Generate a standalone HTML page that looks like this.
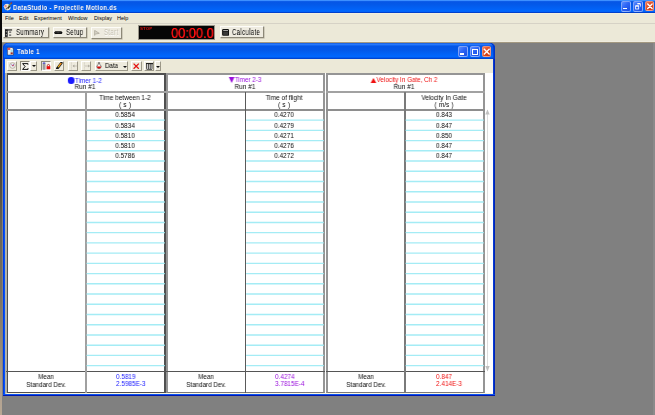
<!DOCTYPE html>
<html><head><meta charset="utf-8">
<style>
*{margin:0;padding:0;box-sizing:border-box}
html,body{width:655px;height:415px;overflow:hidden;background:#808080;font-family:"Liberation Sans",sans-serif;position:relative}
.a{position:absolute}
.t{position:absolute;white-space:nowrap;line-height:1;will-change:transform}
.sx{transform-origin:0 0}
#leftstrip{left:0;top:0;width:2.2px;height:415px;background:linear-gradient(#080808 0%,#0c0b0a 14%,#2a2418 25%,#4a4232 40%,#6a6458 55%,#7a7060 70%,#9a8c78 85%,#b0a090 94%,#b8a894 100%)}
#rightstrip{left:653px;top:43px;width:2px;height:372px;background:#8a8a8a}
#title{left:2px;top:0;width:653px;height:13px;background:linear-gradient(#3d8fff 0,#3d8fff 0.7px,#0656e6 1.6px,#0458e8 4px,#0262f6 9px,#0068ff 11.4px,#0044d4 12.2px,#0038c0 13px)}
#menubar{left:2px;top:13px;width:653px;height:10.5px;background:linear-gradient(#f8f4e2 0,#ECE9D8 1.2px)}
#sep{left:2px;top:23px;width:653px;height:1px;background:#d6d2c6}
#toolbar{left:2px;top:24px;width:653px;height:19px;background:linear-gradient(#ECE9D8 0,#ECE9D8 16.5px,#f8f6ea 17.4px,#b8ac90 18.2px,#807868 19px)}
.btn{position:absolute;background:#EEEBE0;border-right:1px solid #8c8878;border-bottom:1px solid #8c8878;border-top:1px solid #fdfcf8;border-left:1px solid #fdfcf8;box-shadow:0.6px 0.6px 0 #bcb8a8}
.mt{font-size:6.1px;color:#000;transform:scaleX(0.9);transform-origin:0 0;will-change:auto}
.bt{font-size:8.5px;color:#000;letter-spacing:0.45px;transform:scaleX(0.715);transform-origin:0 0;will-change:transform}
.tb{border:0.7px solid rgba(200,220,255,0.55);border-radius:2px;background:linear-gradient(135deg,#5a8cff 0%,#2c64f4 45%,#1a4ee0 100%)}
.tc{border:0.7px solid rgba(255,220,210,0.5);border-radius:2px;background:linear-gradient(135deg,#f07a58 0%,#e04c22 45%,#c83812 100%)}
#child{left:3px;top:43px;width:492.2px;height:353.2px;background:linear-gradient(90deg,#0030d8 0,#0050f8 1.2px,#0a58ff 2.2px,#0a58ff 489.2px,#1060ff 489.8px,#0028c0 490.8px,#0020b0 492.2px);border-radius:5px 5px 0 0}
#ctitle{left:3px;top:43px;width:492.2px;height:16px;border-radius:5px 5px 0 0;box-shadow:inset -1.6px 0 0 #0034c8,inset 1px 0 0 #0040d8;background:linear-gradient(#0040d0 0,#3a8cff 1px,#1a6cf8 1.8px,#0456e6 3.5px,#0458e8 7px,#0262f6 11px,#0068ff 14px,#0048d8 15.2px,#0040c8 16px)}
#cframe{display:none}
#cbottom{left:3px;top:393.6px;width:492.2px;height:2.6px;background:linear-gradient(#1466ff 0,#0a50f0 0.6px,#0018b0 1.4px,#0010a0 2.6px)}
#ctool{left:5.2px;top:59px;width:487.5px;height:13.8px;background:#ECE9D8}
#content{left:5.2px;top:72.8px;width:487.5px;height:321px;background:#fff;border-left:2px solid #b0b0aa;border-bottom:1px solid #fcf6dc}
.grp{position:absolute;top:73px;height:320px;border:1.5px solid #8c8c8c}
.hline{position:absolute;height:1.5px;background:#8a8a8a}
.vline{position:absolute;width:1.2px;background:#6a6a6a}
.cy{position:absolute;height:1px;background:#a6e8f2}
.ht{font-size:6.3px;color:#222}
.dv{font-size:6.2px;color:#222}
.cbtn{position:absolute;top:61px;height:10px;background:#EEEBDE;border-top:1px solid #fff;border-left:1px solid #fff;border-right:1px solid #9c9888;border-bottom:1px solid #9c9888}
.cbtn.p{border-top:1px solid #8c8878;border-left:1px solid #8c8878;border-right:1px solid #fff;border-bottom:1px solid #fff;background:#f4f2ea}
</style></head><body>
<div id="leftstrip" class="a"></div>
<div id="rightstrip" class="a"></div>
<div id="title" class="a"></div>
<!-- app icon -->
<svg class="a" style="left:3px;top:1.5px" width="9" height="9" viewBox="0 0 9 9">
<path d="M0.8 4.2 Q1.5 1.8 4.2 1.8 L6 2.6 L7.6 5.2 Q7.8 8 4.6 8.4 Q1.4 8.2 0.8 4.2 Z" fill="#ece4d6"/>
<circle cx="2.6" cy="4.2" r="1.1" fill="#e88888"/>
<circle cx="3.6" cy="6.6" r="0.9" fill="#6a6a5a"/>
<path d="M4.2 5.8 L6.2 3.6 L7.4 4.6 L5.2 7 Z" fill="#2a2a1a"/>
<path d="M5.6 4.2 L8.4 1" stroke="#7a8a2a" stroke-width="1.1"/>
<circle cx="8.3" cy="1" r="0.7" fill="#c02020"/>
</svg>
<div class="t" style="left:12.8px;top:3.7px;font-size:7px;font-weight:bold;color:#fff;text-shadow:0.4px 0.4px 0 #0a3aa0;letter-spacing:0.38px;transform:scaleX(0.85);transform-origin:0 0">DataStudio - Projectile Motion.ds</div>
<!-- title buttons -->
<div class="a tb" style="left:620.8px;top:0.9px;width:10px;height:10.7px"></div>
<div class="a" style="left:623.1px;top:7.6px;width:3.9px;height:1.4px;background:#fff"></div>
<div class="a tb" style="left:632.9px;top:0.9px;width:10px;height:10.7px"></div>
<svg class="a" style="left:632.9px;top:0.9px" width="10" height="11" viewBox="0 0 10 11"><path d="M4.4 2.9 H7.4 V5.6" stroke="#fff" stroke-width="0.8" fill="none"/><path d="M4.4 2.6 H7.4" stroke="#fff" stroke-width="1.1"/><rect x="2.6" y="5" width="3.1" height="3" stroke="#fff" stroke-width="0.8" fill="none"/><path d="M2.6 4.9 H5.7" stroke="#fff" stroke-width="1.2"/></svg>
<div class="a tc" style="left:644.6px;top:1px;width:9.8px;height:10.4px"></div>
<svg class="a" style="left:644.6px;top:1px" width="10" height="11" viewBox="0 0 10 11"><path d="M2.7 3 L7.1 7.4 M7.1 3 L2.7 7.4" stroke="#fff" stroke-width="1.4" stroke-linecap="round"/></svg>

<div id="menubar" class="a"></div>
<div id="sep" class="a"></div>
<div class="t mt" style="left:4.7px;top:15.4px">File</div>
<div class="t mt" style="left:18.5px;top:15.4px">Edit</div>
<div class="t mt" style="left:34px;top:15.4px">Experiment</div>
<div class="t mt" style="left:68px;top:15.4px">Window</div>
<div class="t mt" style="left:93.5px;top:15.4px">Display</div>
<div class="t mt" style="left:117px;top:15.4px">Help</div>

<div id="toolbar" class="a"></div>
<!-- Summary -->
<div class="btn" style="left:3.4px;top:26.6px;width:45.5px;height:11.9px"></div>
<svg class="a" style="left:5px;top:28.5px" width="8" height="9" viewBox="0 0 8 9"><rect x="0" y="0.4" width="7.1" height="1.1" fill="#111"/><rect x="0" y="0.5" width="2.7" height="7.4" fill="#222"/><circle cx="1.3" cy="2.7" r="0.55" fill="#fff"/><circle cx="1.3" cy="5.8" r="0.55" fill="#fff"/><rect x="4.1" y="2.6" width="2.1" height="1" fill="#333"/><rect x="4.1" y="5.6" width="2.1" height="1" fill="#333"/></svg>
<div class="t mt bt" style="left:15.8px;top:28px">Summary</div>
<!-- Setup -->
<div class="btn" style="left:53.2px;top:26.7px;width:33.6px;height:11.6px"></div>
<svg class="a" style="left:54px;top:30.8px" width="9" height="3.4" viewBox="0 0 9 3.4"><path d="M0 1.7 L1.2 0.2 H7.4 L8.6 1.7 L7.4 3.2 H1.2 Z" fill="#0a0a0a"/><path d="M1.6 1.7 H7" stroke="#999" stroke-width="0.5" stroke-dasharray="0.8 0.5"/></svg>
<div class="t mt bt" style="left:65.5px;top:28px">Setup</div>
<!-- Start -->
<div class="btn" style="left:91.1px;top:26.8px;width:30.8px;height:11.9px"></div>
<svg class="a" style="left:93.5px;top:29.5px" width="6" height="6" viewBox="0 0 6 6"><path d="M0.7 0.3 V5.6" stroke="#a8a496" stroke-width="0.9"/><path d="M0.9 0.6 L5.3 3.3 L0.9 4.2" stroke="#a8a496" stroke-width="0.7" fill="#d4d0c4"/></svg>
<div class="t mt bt" style="left:104px;top:28px;color:#c4c0b2;text-shadow:0.6px 0.6px 0 #fff">Start</div>
<!-- Timer -->
<div class="a" style="left:138.3px;top:24.8px;width:76.4px;height:15.6px;background:#050505;border:0.8px solid #9a968a"></div>
<div class="t" style="left:140px;top:27.2px;font-size:4.3px;font-weight:bold;color:#d41010;transform:scaleX(1.05);transform-origin:0 0">STOP</div>
<div class="t" style="left:171px;top:26.5px;font-size:13.9px;color:#ff1212;text-shadow:0.3px 0 0 #ff1212;transform:scaleX(0.92);transform-origin:0 0">00:00.0</div>
<!-- Calculate -->
<div class="btn" style="left:219.5px;top:26.2px;width:44.5px;height:12.3px"></div>
<svg class="a" style="left:221.6px;top:29.1px" width="7.4" height="7" viewBox="0 0 7.4 7"><rect x="0.1" y="0.1" width="7" height="6.7" rx="1.2" fill="#111"/><rect x="1.2" y="1.1" width="4.8" height="0.8" fill="#ccc"/><rect x="1.2" y="2.6" width="4.8" height="3.3" fill="#3a3a3a"/></svg>
<div class="t mt bt" style="left:231.6px;top:28px">Calculate</div>

<!-- child window -->
<div id="child" class="a"></div>
<div id="ctitle" class="a"></div>
<div id="cframe" class="a"></div>
<div id="cbottom" class="a"></div>
<svg class="a" style="left:6.5px;top:47.4px" width="7" height="8.4" viewBox="0 0 7 8.4"><path d="M0.4 0.4 H5 L6.5 1.9 V8 H0.4 Z" fill="#f6f2e8" stroke="#1a2a60" stroke-width="0.6"/><ellipse cx="2" cy="1.9" rx="1.5" ry="1.2" fill="#e85050"/><rect x="3.6" y="2.4" width="2.2" height="3.2" fill="#a8d8e0"/><rect x="3.6" y="5.4" width="2.2" height="1.8" fill="#a03028"/><rect x="1" y="3.6" width="1.6" height="3.6" fill="#e0e8f0"/></svg>
<div class="t" style="left:16.5px;top:48.2px;font-size:7.4px;font-weight:bold;color:#fff;text-shadow:0.4px 0.4px 0 #0a3aa0;letter-spacing:0.3px;transform:scaleX(0.85);transform-origin:0 0">Table 1</div>
<div class="a tb" style="left:457.9px;top:46.4px;width:9.9px;height:10.4px"></div>
<div class="a" style="left:460.1px;top:53.3px;width:3.9px;height:1.6px;background:#fff"></div>
<div class="a tb" style="left:470px;top:46.4px;width:9.7px;height:10.4px"></div>
<div class="a" style="left:471.8px;top:49.1px;width:6px;height:5.8px;border:0.75px solid #fff;border-top-width:1.5px"></div>
<div class="a tc" style="left:481.9px;top:46.4px;width:9.6px;height:10.4px"></div>
<svg class="a" style="left:481.9px;top:46.4px" width="10" height="11" viewBox="0 0 10 11"><path d="M1.8 2.8 L7.6 8.6 M7.6 2.8 L1.8 8.6" stroke="#fff" stroke-width="1.35"/></svg>

<div id="ctool" class="a"></div>
<!-- clock -->
<div class="cbtn" style="left:6.5px;width:10.5px"></div>
<svg class="a" style="left:9px;top:62px" width="7" height="7" viewBox="0 0 7 7"><circle cx="3.5" cy="3.5" r="2.8" fill="#f4f2ea" stroke="#aaa59a" stroke-width="0.8"/><path d="M2.5 2.5 L3.8 4.2 L4.5 2.2" stroke="#7050c0" stroke-width="0.9" fill="none"/><circle cx="4" cy="3.4" r="0.7" fill="#e04040"/></svg>
<!-- sigma -->
<div class="cbtn p" style="left:20px;width:10px"></div>
<svg class="a" style="left:21.5px;top:63px" width="7" height="7" viewBox="0 0 7 7"><path d="M5.9 1.7 V0.6 H0.6 L3.1 3.5 L0.6 6.4 H6 V5.2" stroke="#111" stroke-width="1" fill="none" stroke-linejoin="miter"/></svg>
<div class="cbtn" style="left:30px;width:7px"></div>
<svg class="a" style="left:32px;top:65px" width="4" height="2" viewBox="0 0 4 2"><path d="M0 0 H4 L2 2 Z" fill="#111"/></svg>
<!-- lock -->
<div class="cbtn p" style="left:41px;width:9.5px"></div>
<svg class="a" style="left:42px;top:62px" width="9" height="8" viewBox="0 0 9 8"><rect x="0.7" y="0.8" width="2.7" height="6.8" fill="#8a8a8a"/><rect x="1.6" y="0.8" width="0.9" height="6.8" fill="#b4b4b4"/><ellipse cx="2.05" cy="1" rx="1.35" ry="0.6" fill="#2828e8"/><path d="M5.3 4.4 V3.6 A1.15 1.15 0 0 1 7.6 3.6 V4.4" stroke="#b01010" stroke-width="0.8" fill="none"/><rect x="4.6" y="4.2" width="3.7" height="3" fill="#e80c0c"/></svg>
<!-- pencil -->
<div class="cbtn" style="left:54px;width:10px"></div>
<svg class="a" style="left:56px;top:62.4px" width="7" height="7" viewBox="0 0 7 7"><path d="M1.3 6.5 L5.4 0.9" stroke="#1a1a1a" stroke-width="2.5" stroke-linecap="round"/><path d="M2.2 5.2 L5.2 1.1" stroke="#f4b820" stroke-width="1.2"/><path d="M3.6 3.4 L5.2 1.1" stroke="#e86818" stroke-width="0.8"/></svg>
<!-- arrows -->
<div class="cbtn" style="left:68px;width:10px"></div>
<svg class="a" style="left:69.5px;top:62.2px" width="8" height="8" viewBox="0 0 8 8"><path d="M1.4 0.5 V7.5" stroke="#d0ccc0" stroke-width="1" stroke-dasharray="1.2 0.8"/><path d="M3 4 H7" stroke="#c8c4b8" stroke-width="1"/><path d="M2.6 4 L4.4 2.5 V5.5 Z" fill="#a8a498"/></svg>
<div class="cbtn" style="left:81px;width:10px"></div>
<svg class="a" style="left:82.5px;top:62.2px" width="8" height="8" viewBox="0 0 8 8"><path d="M1.4 0.5 V7.5" stroke="#d0ccc0" stroke-width="1" stroke-dasharray="1.2 0.8"/><path d="M1.8 4 H5.5" stroke="#c8c4b8" stroke-width="1"/><path d="M7 4 L5.2 2.5 V5.5 Z" fill="#a8a498"/></svg>
<!-- Data -->
<div class="cbtn" style="left:94.5px;width:33.5px"></div>
<svg class="a" style="left:96px;top:62.3px" width="6" height="7.2" viewBox="0 0 6 7.2"><path d="M2.1 0.4 H3.9" stroke="#444" stroke-width="0.7"/><path d="M2.4 0.6 V2.3 L1 3.6 A2.2 2.2 0 1 0 5 3.6 L3.6 2.3 V0.6" stroke="#555" stroke-width="0.75" fill="#f8f6f0"/><path d="M0.9 4.4 A2.1 2.1 0 0 0 5.1 4.4 Z" fill="#d80c0c"/></svg>
<div class="t" style="left:105px;top:62.4px;font-size:7px;color:#000;transform:scaleX(0.88);transform-origin:0 0">Data</div>
<svg class="a" style="left:123px;top:65.5px" width="4" height="2" viewBox="0 0 4 2"><path d="M0 0 H4 L2 2 Z" fill="#111"/></svg>
<!-- X -->
<div class="cbtn" style="left:131px;width:10.5px"></div>
<svg class="a" style="left:133px;top:62.7px" width="6.5" height="6.5" viewBox="0 0 6.5 6.5"><path d="M0.6 0.6 L5.8 5.8 M5.8 0.6 L0.6 5.8" stroke="#e41010" stroke-width="1.25"/></svg>
<!-- columns -->
<div class="cbtn" style="left:144px;width:10px"></div>
<svg class="a" style="left:146.2px;top:62.5px" width="7.2" height="7.2" viewBox="0 0 7.2 7.2"><path d="M0 0.6 H7.2" stroke="#1a1a1a" stroke-width="1.1"/><path d="M0.6 1 V5.6 Q0.6 6.7 1.5 6.7 Q2.4 6.7 2.4 5.6 V1 M2.4 5.6 Q2.4 6.7 3.3 6.7 Q4.2 6.7 4.2 5.6 V1 M4.2 5.6 Q4.2 6.7 5.1 6.7 Q6.0 6.7 6.0 5.6 V1" stroke="#1a1a1a" stroke-width="0.8" fill="#f0f0f0"/></svg>
<div class="cbtn" style="left:154.5px;width:6.5px"></div>
<svg class="a" style="left:156px;top:65.5px" width="4" height="2" viewBox="0 0 4 2"><path d="M0 0 H4 L2 2 Z" fill="#111"/></svg>

<div id="content" class="a"></div>
<div class="a" style="left:6.8px;top:73.3px;width:159.2px;height:319.7px;border:2px solid #505050;border-left-width:1.2px;border-bottom-width:1.3px"></div>
<div class="a" style="left:6px;top:91.2px;width:160px;height:1.6px;background:#a2a2a2"></div>
<div class="a" style="left:6px;top:109.2px;width:160px;height:1.6px;background:#8e8e8e"></div>
<div class="a" style="left:6px;top:370.5px;width:160px;height:1.1px;background:#555"></div>
<div class="a" style="left:85px;top:92px;width:2px;height:301px;background:#a0a0a0"></div>
<svg class="a" style="left:0;top:0" width="655" height="415"><path d="M86.60 120.13H164.80 M86.60 130.36H164.80 M86.60 140.59H164.80 M86.60 150.82H164.80 M86.60 161.05H164.80 M86.60 171.28H164.80 M86.60 181.51H164.80 M86.60 191.74H164.80 M86.60 201.97H164.80 M86.60 212.20H164.80 M86.60 222.43H164.80 M86.60 232.66H164.80 M86.60 242.89H164.80 M86.60 253.12H164.80 M86.60 263.35H164.80 M86.60 273.58H164.80 M86.60 283.81H164.80 M86.60 294.04H164.80 M86.60 304.27H164.80 M86.60 314.50H164.80 M86.60 324.73H164.80 M86.60 334.96H164.80 M86.60 345.19H164.80 M86.60 355.42H164.80 M86.60 365.65H164.80" stroke="#a4ecf5" stroke-width="1.4" fill="none"/></svg>
<div class="t" style="left:-64.60px;width:300px;top:76.60px;text-align:center;font-size:6.6px;color:#1a1aff;transform:scaleX(0.955);transform-origin:50% 0;"><span style="display:inline-block;width:6.6px;height:6.6px;border-radius:50%;background:#1a1aff;vertical-align:-0.8px;margin-right:0.6px"></span>Timer 1-2</div>
<div class="t" style="left:-64.60px;width:300px;top:84.10px;text-align:center;font-size:6.6px;color:#0a0a0a;transform:scaleX(0.97);transform-origin:50% 0;">Run #1</div>
<div class="t" style="left:-25.00px;width:300px;top:94.90px;text-align:center;font-size:6.6px;color:#0a0a0a;transform:scaleX(0.98);transform-origin:50% 0;">Time between 1-2</div>
<div class="t" style="left:-25.00px;width:300px;top:102.30px;text-align:center;font-size:6.6px;color:#0a0a0a;transform:scaleX(0.98);transform-origin:50% 0;word-spacing:0.4px">( s )</div>
<div class="t" style="left:-25.00px;width:300px;top:112.40px;text-align:center;font-size:6.6px;color:#0a0a0a;transform:scaleX(0.97);transform-origin:50% 0;">0.5854</div>
<div class="t" style="left:-25.00px;width:300px;top:122.63px;text-align:center;font-size:6.6px;color:#0a0a0a;transform:scaleX(0.97);transform-origin:50% 0;">0.5834</div>
<div class="t" style="left:-25.00px;width:300px;top:132.86px;text-align:center;font-size:6.6px;color:#0a0a0a;transform:scaleX(0.97);transform-origin:50% 0;">0.5810</div>
<div class="t" style="left:-25.00px;width:300px;top:143.09px;text-align:center;font-size:6.6px;color:#0a0a0a;transform:scaleX(0.97);transform-origin:50% 0;">0.5810</div>
<div class="t" style="left:-25.00px;width:300px;top:153.32px;text-align:center;font-size:6.6px;color:#0a0a0a;transform:scaleX(0.97);transform-origin:50% 0;">0.5786</div>
<div class="t" style="left:-104.00px;width:300px;top:374.10px;text-align:center;font-size:6.6px;color:#0a0a0a;transform:scaleX(0.94);transform-origin:50% 0;">Mean</div>
<div class="t" style="left:-104.00px;width:300px;top:381.60px;text-align:center;font-size:6.6px;color:#0a0a0a;transform:scaleX(0.955);transform-origin:50% 0;">Standard Dev.</div>
<div class="t" style="left:115.50px;top:373.80px;font-size:6.6px;color:#1a1aff;transform:scaleX(0.97);transform-origin:0 0;">0.5819</div>
<div class="t" style="left:115.50px;top:381.30px;font-size:6.6px;color:#1a1aff;transform:scaleX(0.97);transform-origin:0 0;">2.5985E-3</div>
<div class="a" style="left:166px;top:73.3px;width:159px;height:319.7px;border:2px solid #959595;border-bottom:1px solid #7a7a7a"></div>
<div class="a" style="left:166px;top:91.2px;width:159px;height:1.6px;background:#a2a2a2"></div>
<div class="a" style="left:166px;top:109.2px;width:159px;height:1.6px;background:#8e8e8e"></div>
<div class="a" style="left:166px;top:370.5px;width:159px;height:1.1px;background:#555"></div>
<div class="a" style="left:244.9px;top:92px;width:1.3px;height:301px;background:#5a5a5a"></div>
<svg class="a" style="left:0;top:0" width="655" height="415"><path d="M246.10 120.13H323.80 M246.10 130.36H323.80 M246.10 140.59H323.80 M246.10 150.82H323.80 M246.10 161.05H323.80 M246.10 171.28H323.80 M246.10 181.51H323.80 M246.10 191.74H323.80 M246.10 201.97H323.80 M246.10 212.20H323.80 M246.10 222.43H323.80 M246.10 232.66H323.80 M246.10 242.89H323.80 M246.10 253.12H323.80 M246.10 263.35H323.80 M246.10 273.58H323.80 M246.10 283.81H323.80 M246.10 294.04H323.80 M246.10 304.27H323.80 M246.10 314.50H323.80 M246.10 324.73H323.80 M246.10 334.96H323.80 M246.10 345.19H323.80 M246.10 355.42H323.80 M246.10 365.65H323.80" stroke="#a4ecf5" stroke-width="1.4" fill="none"/></svg>
<div class="t" style="left:94.90px;width:300px;top:76.60px;text-align:center;font-size:6.6px;color:#9a10dc;transform:scaleX(0.955);transform-origin:50% 0;"><span style="display:inline-block;width:0;height:0;border-left:3.6px solid transparent;border-right:3.6px solid transparent;border-top:6.2px solid #9a10dc;vertical-align:-0.8px;margin-right:0.3px"></span>Timer 2-3</div>
<div class="t" style="left:94.90px;width:300px;top:84.10px;text-align:center;font-size:6.6px;color:#0a0a0a;transform:scaleX(0.97);transform-origin:50% 0;">Run #1</div>
<div class="t" style="left:134.25px;width:300px;top:94.90px;text-align:center;font-size:6.6px;color:#0a0a0a;transform:scaleX(0.98);transform-origin:50% 0;">Time of flight</div>
<div class="t" style="left:134.25px;width:300px;top:102.30px;text-align:center;font-size:6.6px;color:#0a0a0a;transform:scaleX(0.98);transform-origin:50% 0;word-spacing:0.4px">( s )</div>
<div class="t" style="left:134.25px;width:300px;top:112.40px;text-align:center;font-size:6.6px;color:#0a0a0a;transform:scaleX(0.97);transform-origin:50% 0;">0.4270</div>
<div class="t" style="left:134.25px;width:300px;top:122.63px;text-align:center;font-size:6.6px;color:#0a0a0a;transform:scaleX(0.97);transform-origin:50% 0;">0.4279</div>
<div class="t" style="left:134.25px;width:300px;top:132.86px;text-align:center;font-size:6.6px;color:#0a0a0a;transform:scaleX(0.97);transform-origin:50% 0;">0.4271</div>
<div class="t" style="left:134.25px;width:300px;top:143.09px;text-align:center;font-size:6.6px;color:#0a0a0a;transform:scaleX(0.97);transform-origin:50% 0;">0.4276</div>
<div class="t" style="left:134.25px;width:300px;top:153.32px;text-align:center;font-size:6.6px;color:#0a0a0a;transform:scaleX(0.97);transform-origin:50% 0;">0.4272</div>
<div class="t" style="left:55.75px;width:300px;top:374.10px;text-align:center;font-size:6.6px;color:#0a0a0a;transform:scaleX(0.94);transform-origin:50% 0;">Mean</div>
<div class="t" style="left:55.75px;width:300px;top:381.60px;text-align:center;font-size:6.6px;color:#0a0a0a;transform:scaleX(0.955);transform-origin:50% 0;">Standard Dev.</div>
<div class="t" style="left:274.80px;top:373.80px;font-size:6.6px;color:#9a10dc;transform:scaleX(0.97);transform-origin:0 0;">0.4274</div>
<div class="t" style="left:274.80px;top:381.30px;font-size:6.6px;color:#9a10dc;transform:scaleX(0.97);transform-origin:0 0;">3.7815E-4</div>
<div class="a" style="left:326px;top:73.3px;width:159px;height:319.7px;border:2px solid #959595;border-bottom:1px solid #7a7a7a"></div>
<div class="a" style="left:326px;top:91.2px;width:159px;height:1.6px;background:#a2a2a2"></div>
<div class="a" style="left:326px;top:109.2px;width:159px;height:1.6px;background:#8e8e8e"></div>
<div class="a" style="left:326px;top:370.5px;width:159px;height:1.1px;background:#555"></div>
<div class="a" style="left:404.2px;top:92px;width:1.6px;height:301px;background:#7a7a7a"></div>
<svg class="a" style="left:0;top:0" width="655" height="415"><path d="M405.60 120.13H483.80 M405.60 130.36H483.80 M405.60 140.59H483.80 M405.60 150.82H483.80 M405.60 161.05H483.80 M405.60 171.28H483.80 M405.60 181.51H483.80 M405.60 191.74H483.80 M405.60 201.97H483.80 M405.60 212.20H483.80 M405.60 222.43H483.80 M405.60 232.66H483.80 M405.60 242.89H483.80 M405.60 253.12H483.80 M405.60 263.35H483.80 M405.60 273.58H483.80 M405.60 283.81H483.80 M405.60 294.04H483.80 M405.60 304.27H483.80 M405.60 314.50H483.80 M405.60 324.73H483.80 M405.60 334.96H483.80 M405.60 345.19H483.80 M405.60 355.42H483.80 M405.60 365.65H483.80" stroke="#a4ecf5" stroke-width="1.4" fill="none"/></svg>
<div class="t" style="left:254.30px;width:300px;top:76.60px;text-align:center;font-size:6.6px;color:#f01010;transform:scaleX(0.955);transform-origin:50% 0;"><span style="display:inline-block;width:0;height:0;border-left:3.5px solid transparent;border-right:3.5px solid transparent;border-bottom:5.8px solid #f01010;vertical-align:-0.5px;margin-right:0.3px"></span>Velocity In Gate, Ch 2</div>
<div class="t" style="left:254.30px;width:300px;top:84.10px;text-align:center;font-size:6.6px;color:#0a0a0a;transform:scaleX(0.97);transform-origin:50% 0;">Run #1</div>
<div class="t" style="left:294.00px;width:300px;top:94.90px;text-align:center;font-size:6.6px;color:#0a0a0a;transform:scaleX(0.98);transform-origin:50% 0;">Velocity In Gate</div>
<div class="t" style="left:294.00px;width:300px;top:102.30px;text-align:center;font-size:6.6px;color:#0a0a0a;transform:scaleX(0.98);transform-origin:50% 0;word-spacing:0.4px">( m/s )</div>
<div class="t" style="left:294.00px;width:300px;top:112.40px;text-align:center;font-size:6.6px;color:#0a0a0a;transform:scaleX(0.97);transform-origin:50% 0;">0.843</div>
<div class="t" style="left:294.00px;width:300px;top:122.63px;text-align:center;font-size:6.6px;color:#0a0a0a;transform:scaleX(0.97);transform-origin:50% 0;">0.847</div>
<div class="t" style="left:294.00px;width:300px;top:132.86px;text-align:center;font-size:6.6px;color:#0a0a0a;transform:scaleX(0.97);transform-origin:50% 0;">0.850</div>
<div class="t" style="left:294.00px;width:300px;top:143.09px;text-align:center;font-size:6.6px;color:#0a0a0a;transform:scaleX(0.97);transform-origin:50% 0;">0.847</div>
<div class="t" style="left:294.00px;width:300px;top:153.32px;text-align:center;font-size:6.6px;color:#0a0a0a;transform:scaleX(0.97);transform-origin:50% 0;">0.847</div>
<div class="t" style="left:215.50px;width:300px;top:374.10px;text-align:center;font-size:6.6px;color:#0a0a0a;transform:scaleX(0.94);transform-origin:50% 0;">Mean</div>
<div class="t" style="left:215.50px;width:300px;top:381.60px;text-align:center;font-size:6.6px;color:#0a0a0a;transform:scaleX(0.955);transform-origin:50% 0;">Standard Dev.</div>
<div class="t" style="left:436.00px;top:373.80px;font-size:6.6px;color:#f01010;transform:scaleX(0.97);transform-origin:0 0;">0.847</div>
<div class="t" style="left:436.00px;top:381.30px;font-size:6.6px;color:#f01010;transform:scaleX(0.97);transform-origin:0 0;">2.414E-3</div>
<svg class="a" style="left:485px;top:109px" width="5" height="264" viewBox="0 0 5 264"><path d="M2.5 1 V262" stroke="#d4d4d4" stroke-width="0.8"/><path d="M0.3 5.5 L2.5 0.5 L4.7 5.5 Z" fill="#c0c0c0"/><path d="M0.3 257 L2.5 262.5 L4.7 257 Z" fill="#c0c0c0"/></svg>
</body></html>
